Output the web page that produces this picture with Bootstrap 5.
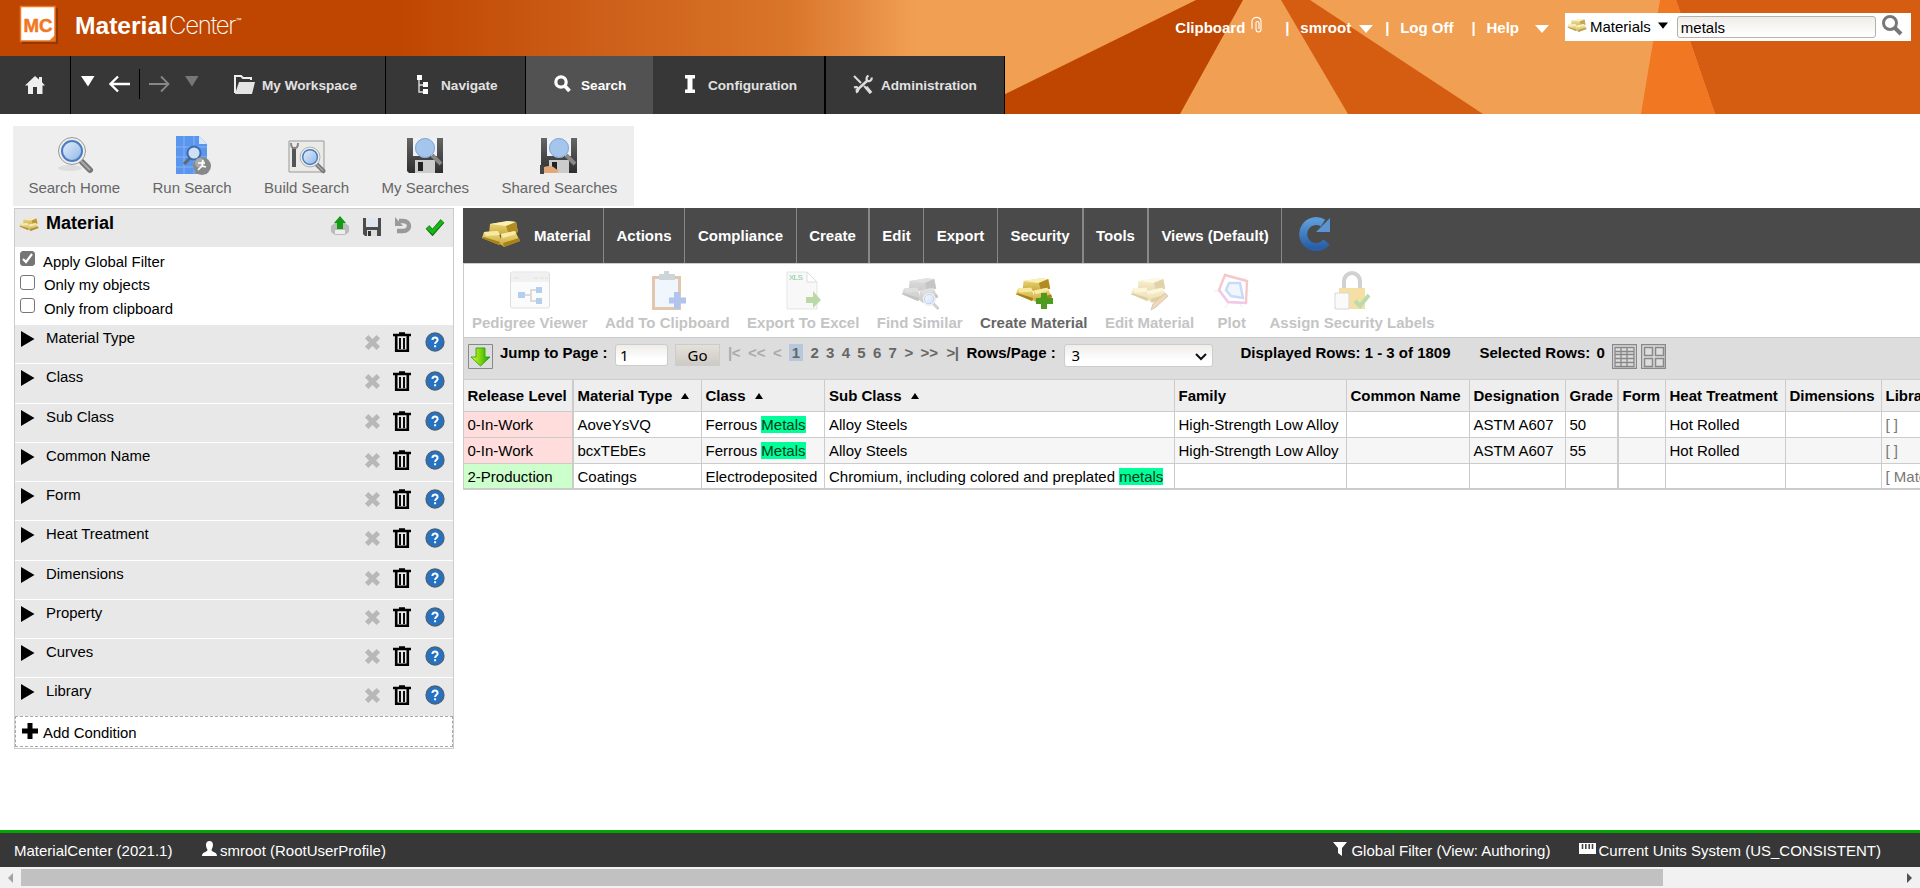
<!DOCTYPE html>
<html lang="en">
<head>
<meta charset="utf-8">
<title>MaterialCenter</title>
<link rel="stylesheet" href="https://cdn.jsdelivr.net/npm/bootstrap@5.3.0/dist/css/bootstrap.min.css">
<style>
body{font:15px/17px "Liberation Sans",Arial,sans-serif;color:#000;background:#fff;height:888px;overflow:hidden;display:flex;flex-direction:column}
svg{display:block;flex:none}
.masthead{height:114px;position:relative;overflow:hidden;flex:none}
.masthead .backdrop{position:absolute;left:0;top:0}
.masthead .topline,.masthead .mainnav{position:relative}
.topline{height:56px;color:#fff;font-weight:bold}
.wordmark{font-size:24.6px;line-height:28px;white-space:nowrap;font-weight:bold;letter-spacing:0}
.wordmark span{font-family:Inter,"Liberation Sans",sans-serif;font-weight:200;font-size:24px;letter-spacing:-1.2px;margin-left:1px}
.wordmark sup{font-size:6px;top:-12px;font-weight:400}
.userlinks{height:28px;margin-top:13px}
.userlinks>*{flex:none;white-space:nowrap}
.quick{width:346px;height:28px;background:#fff;color:#000;font-weight:normal;margin-right:9px;padding:0 8px 0 2px}
.quick .field{width:199px;height:22px;border:1px solid #b5b2ac;border-radius:3px;background:linear-gradient(#efede8,#fff);padding:2px 3px}
.mainnav{height:58px;width:1005px;background:#373737;color:#e2e2e2;font-weight:bold;font-size:13.6px;border-right:1px solid #000}
.mainnav>div{height:58px;border-right:1px solid #000;white-space:nowrap}
.mainnav>div:last-child{border-right:0}
.mainnav .current{background:#525252;color:#fff;border-right:0}
.searchbar{width:621px;height:80px;background:#eee;margin:12px 0 2px 13px;color:#666;padding:9px 0 0}
.searchbar>div{padding:0 16.2px;white-space:nowrap}
.searchbar>div:first-child{padding-left:15.4px}
.searchbar svg{margin:0 auto 4px}
.filters{width:440px;border:1px solid #ccc;margin-left:14px;height:541px;background:#fff;font-size:14.9px;flex:none}
.filters .cap{height:38px;background:#e8e8e8;padding:4px 8px 0 4px}
.filters .cap b{font-size:18px;line-height:20px}
.checks{height:78px;padding:4px 0 0 5px}
.checks label{display:flex;height:23.5px}
.tick{width:15px;height:15px;border:1.4px solid #767676;border-radius:3px;background:#fff;margin-right:9px;flex:none}
.tick.on{background:#767676;margin-right:8px}
.checks span{padding-top:2.500px}
.cond{height:39.25px;background:#e8e8e8;border-bottom:1px solid #fff;padding-left:6px;padding-right:8px}
.cond.last{height:38px;border-bottom:0}
.cond span{margin:5px 0 0 11px}
.cond .del{margin-left:auto}
.addcond{height:31px;border:1px dashed #a8a8a8;padding:6px 6px;margin-top:0}
.panel{margin-left:9px;width:1457px;overflow:hidden;flex:none}
.tabs{height:55px;background:#4a4a4a;color:#fff;font-weight:bold}
.tabs>div{height:55px;border-right:1px solid #888;display:flex;justify-content:center;align-items:center;white-space:nowrap;flex:none;padding-bottom:1px}
.tabs .thick{border-right-width:2px}
.tools{height:74px;border:solid #ccc;border-width:1px 0 0 1px;padding:5px 0 0;font-weight:bold;color:#666}
.tools>div{padding:0 8.7px;min-width:58px;text-align:center;white-space:nowrap}
.tools>div:first-child{padding-left:8px}
.tools svg{margin:0 auto 3px}
.tools .off{color:#c4c4c4}
.tools .off svg{opacity:.38}
.pager{height:42px;border:solid #ccc;border-width:1px 0 0 1px;background:#ddd;padding:6px 0 0 4px;font-weight:bold}
.pager>*{flex:none;white-space:nowrap}
.pager .pg{color:#666}
.pager .dim{color:#aaa}
.pager .here{background:#b9c7dd;width:14px;height:17px;text-align:center}
.inp{font:15px/20px "Noto Sans","Liberation Sans",sans-serif;height:22px;border:1px solid #ccc;border-radius:3px;background:linear-gradient(#efede9,#fff 70%)}
.gobtn{background:linear-gradient(#e4e0da,#cfcac3);border-radius:0;text-align:center}
.grid{table-layout:fixed;width:1540px;border-collapse:separate;border-spacing:0;border-left:1px solid #ccc;border-top:1px solid #ccc}
.grid th,.grid td{border-right:1px solid #ccc;border-bottom:1px solid #ccc;padding:4px 0 0 3.500px;vertical-align:top;height:26px;white-space:nowrap}
.grid th{height:32px;background:#eee;padding-top:7px;font-weight:bold}
.grid .w2{border-right-width:2px}
.grid tbody tr:nth-child(2) td{background:#f6f6f6}
.grid tbody tr:last-child td{border-bottom-width:2px}
.grid tbody .work,.grid tbody tr:nth-child(2) .work{background:#fdd}
.grid tbody .prod{background:#cfc}
.grid .s4{padding-left:4px}
.grid em{font-style:normal;background:#0f9;color:#003b1c}
.grid i{display:inline-block;border:solid transparent;border-width:0 4.5px 6px;border-bottom-color:#000;margin-left:9px;vertical-align:2px}
.grid .lib{color:#777}
.statusbar{height:37px;border-top:3px solid #00a800;background:#373737;color:#fff;margin-top:auto;flex:none;padding-left:14px}
.scroller{height:21px;background:#f1f1f1;flex:none}
.scroller .thumb{height:17px;width:1642px;background:#c1c1c1;margin:0 0 0 8px}
</style>
</head>
<body>
<svg width="0" height="0" style="position:absolute">
<defs>
<linearGradient id="gold" x2="0" y2="1"><stop stop-color="#f0dc86"/><stop offset="1" stop-color="#c9a838"/></linearGradient>
<linearGradient id="lens" x2="1" y2="1"><stop stop-color="#e6f0fb"/><stop offset="1" stop-color="#8fb6e6"/></linearGradient>
<linearGradient id="blu" x2="0" y2="1"><stop stop-color="#5b9bd8"/><stop offset="1" stop-color="#2a5fa8"/></linearGradient>
<linearGradient id="steel" x2="0" y2="1"><stop stop-color="#666"/><stop offset="1" stop-color="#2e2e2e"/></linearGradient>
<linearGradient id="grn" x2="1" y2="0"><stop stop-color="#e0ff20"/><stop offset="1" stop-color="#19a800"/></linearGradient>
<symbol id="bars" viewBox="0 0 40 28">
<path d="M9 4l18-3 8 1 2 10-9 3-20-1z" fill="url(#gold)"/><path d="M9 4l18-3 8 1-10 4z" fill="#fbf0b4"/><path d="M25 6l10-4 2 10-9 3z" fill="#b08c22"/>
<path d="M3 12l14-1 4 12-3 2-17-7z" fill="url(#gold)"/><path d="M3 12l14-1 2 4-14 1z" fill="#f7e9a0"/>
<path d="M20 14l14-3 5 10-16 6-4-3z" fill="url(#gold)"/><path d="M20 14l14-3 1 3-13 4z" fill="#f9eba6"/><path d="M1 18l17 7 1-3-16-5zM23 27l16-6-1-3-16 5z" fill="#a8811a"/>
</symbol>
<symbol id="mag" viewBox="0 0 38 38"><path d="M24 25l9 9" stroke="#777" stroke-width="6" stroke-linecap="round"/><path d="M24 25l9 9" stroke="#aaa" stroke-width="2"/><circle cx="15" cy="15" r="13.5" fill="#eee" stroke="#999"/><circle cx="15" cy="15" r="10" fill="url(#lens)" stroke="#4a7dbf" stroke-width="2"/></symbol>
<symbol id="disk" viewBox="0 0 38 38"><path d="M1 2h36v35H3l-2-2z" fill="url(#steel)"/><path d="M7 2h24v18H7z" fill="#eef2f6"/><path d="M9 24h20v13H9z" fill="#ccc"/><path d="M12 26h5v9h-5z" fill="#222"/><path d="M26 19l9 9" stroke="#888" stroke-width="4"/><circle cx="19" cy="12" r="10" fill="#ccd"/><circle cx="19" cy="12" r="9.5" fill="#a5c6ec" stroke="#7fa8d8"/></symbol>
<symbol id="tri" viewBox="0 0 14 16"><path d="M0 0l13.500 8L0 16z" fill="#000"/></symbol>
<symbol id="ex" viewBox="0 0 16 16"><path d="M2.500 2.500l11 11M13.500 2.500l-11 11" stroke="#b8b8b8" stroke-width="4.600"/></symbol>
<symbol id="bin" viewBox="0 0 18 20"><path d="M6 1.500h6M0 3h18" stroke="#000" stroke-width="2.600" fill="none"/><path d="M3.200 4v14.700h11.600V4" fill="none" stroke="#000" stroke-width="2.600"/><path d="M7 6v11M11 6v11" stroke="#000" stroke-width="1.900"/></symbol>
<symbol id="help" viewBox="0 0 20 20"><circle cx="10" cy="10" r="9" fill="#2672c0" stroke="#4b6177" stroke-width="1.300"/><path d="M7.400 8c0-3.400 5.200-3.200 5.200 0 0 1.700-2.500 1.900-2.500 3.900M10.100 13.300v2" fill="none" stroke="#fff" stroke-width="2"/></symbol>
<symbol id="down" viewBox="0 0 14 10"><path d="M0 0h14L7 8z" fill="currentColor"/></symbol>
</defs></svg>

<header class="masthead">
<svg class="backdrop" width="1920" height="114"><defs><linearGradient id="sky" gradientUnits="userSpaceOnUse" x1="400" x2="915" y1="0" y2="0"><stop stop-color="#bf4600"/><stop offset=".4" stop-color="#cd601a"/><stop offset=".75" stop-color="#d97528"/><stop offset=".88" stop-color="#e48a40"/><stop offset="1" stop-color="#f19f53"/></linearGradient></defs>
<path fill="url(#sky)" d="M0 0h1920v114H0z"/><path fill="#bf4600" d="M1196 0h47l-63 114H965z"/><path fill="#d45d12" d="M1281 0h29l173 114h-135zM1676 0h244v114h-205z"/><path fill="#f17723" d="M1660 0h16l39 114h-74z"/></svg>
<div class="topline d-flex">
<svg width="42" height="46" class="ms-3" style="margin-top:3px"><path d="M6 5h36v36H6z" fill="#6b2700" opacity=".5"/><path d="M4.500 3.500h34.500v34.500H4.500z" fill="#fff" stroke="#f17723" stroke-width="1.500"/><path d="M39 32v6h-6z" fill="#f17723"/><text x="22" y="28.500" text-anchor="middle" font-size="19" font-weight="bold" fill="#f17723" stroke="#f17723" stroke-width=".5" textLength="29" lengthAdjust="spacingAndGlyphs">MC</text></svg>
<div class="wordmark" style="margin:12px 0 0 17px">Material<span>Center</span><sup>™</sup></div>
<div class="userlinks d-flex ms-auto">
<div style="margin:6px 5px 0 0">Clipboard</div>
<svg width="13" height="18" viewBox="0 0 13 18" style="margin:3px 22px 0 0"><path d="M2 13V5.500C2 0 11 0 11 5.500V13c0 4-5 4-5 0V7c0-2 3-2 3 0v6" fill="none" stroke="#fff" stroke-width="1.100"/></svg>
<div style="margin:6px 11px 0 0;width:4px">|</div><div style="margin:6px 8px 0 0">smroot</div><svg width="14" height="10" style="margin:12px 12px 0 0"><use href="#down"/></svg>
<div style="margin:6px 11px 0 0;width:4px">|</div><div style="margin:6px 18px 0 0">Log Off</div><div style="margin:6px 11px 0 0;width:4px">|</div><div style="margin:6px 16px 0 0">Help</div><svg width="14" height="10" style="margin:12px 16px 0 0"><use href="#down"/></svg>
<div class="quick d-flex align-items-center"><svg width="20" height="15" opacity=".75" style="margin-bottom:3px"><use href="#bars"/></svg><span style="margin-left:3px;margin-top:-2px">Materials</span><svg width="10" height="8" viewBox="0 0 14 10" style="margin:0 9px 2px 7px"><path d="M0 0h14L7 9z"/></svg><div class="field">metals</div><svg width="22" height="22" viewBox="0 0 22 22" class="ms-auto" style="margin-bottom:4px"><circle cx="9" cy="9" r="6.500" fill="none" stroke="#777" stroke-width="3"/><path d="M14 14l6 6" stroke="#777" stroke-width="4"/></svg></div>
</div></div>
<nav class="mainnav d-flex">
<div style="width:71px;padding:20px 0 0 25px"><svg width="20" height="18" viewBox="0 0 20 18"><path d="M10 0l4 3.600V1h3v5.200l3 3.300h-2.500V18H12v-7H8v7H3V9.500H0z" fill="#eee"/></svg></div>
<div class="d-flex" style="width:315px;padding-left:10px"><svg width="14" height="12" viewBox="0 0 14 12" style="margin:20px 15px 0 0"><path d="M0 0h13.500L7 10.500z" fill="#fff"/></svg>
<svg width="22" height="18" viewBox="0 0 22 18" style="margin:19px 7px 0 -1px"><path d="M21 9H2M9 1.500L1.500 9 9 16.500" fill="none" stroke="#fff" stroke-width="2.300"/></svg>
<div style="width:1px;height:30px;background:#000;margin:13px 9px 0 1px"></div>
<svg width="22" height="18" viewBox="0 0 22 18" style="margin:19px 14px 0 0"><path d="M0 9h19M12 1.500L19.500 9 12 16.500" fill="none" stroke="#888" stroke-width="1.800"/></svg>
<svg width="14" height="12" viewBox="0 0 14 12" style="margin:20px 35px 0 0"><path d="M0 0h13.500L7 10.500z" fill="#777"/></svg>
<svg width="22" height="19" viewBox="0 0 22 19" style="margin:19px 6px 0 0"><path d="M1 18V1h6l2 2h8v2" fill="none" stroke="#eee" stroke-width="2"/><path d="M5 7h16l-3 12H1z" fill="#e4e4e4"/></svg><span style="margin-top:21px">My Workspace</span></div>
<div class="d-flex" style="width:140px;padding-left:31px"><svg width="11" height="20" viewBox="0 0 11 20" style="margin:19px 13px 0 0"><path d="M2 2v15h5M2 10h5" fill="none" stroke="#ddd" stroke-width="1.400"/><path d="M0 0h5v5H0zM6 7h5v5H6zM6 14h5v5H6z" fill="#fff"/></svg><span style="margin-top:21px">Navigate</span></div>
<div class="d-flex current" style="width:127px;padding-left:28px"><svg width="17" height="18" viewBox="0 0 17 18" style="margin:19px 10px 0 0"><circle cx="7" cy="7" r="5.200" fill="none" stroke="#fff" stroke-width="3.200"/><path d="M10 10l5.500 6" stroke="#fff" stroke-width="3.800"/></svg><span style="margin-top:21px">Search</span></div>
<div class="d-flex" style="width:173px;padding-left:32px;border-right-width:2px"><svg width="10" height="18" viewBox="0 0 10 18" style="margin:19px 13px 0 0"><path d="M0 0h10v3.500H7.500v11H10V18H0v-3.500h2.500v-11H0z" fill="#fff"/></svg><span style="margin-top:21px">Configuration</span></div>
<div class="d-flex" style="padding-left:27px"><svg width="20" height="19" viewBox="0 0 20 19" style="margin:19px 8px 0 0"><path d="M1 1l7 7M11 11l6 6" stroke="#ddd" stroke-width="2"/><path d="M13 12l5 6" stroke="#ddd" stroke-width="3.500"/><path d="M3 16L15 5" stroke="#ddd" stroke-width="2.400"/><path d="M18.500 2.500c1 4-5 5-5 1.500 0-2 1-3 2-3.500M1 12.500c4-2 6 3 2 5" fill="none" stroke="#ddd" stroke-width="2.200"/></svg><span style="margin-top:21px">Administration</span></div>
</nav>
</header>

<section class="searchbar d-flex">
<div><svg width="38" height="40" viewBox="0 0 38 40" style="transform:translateX(2px)"><ellipse cx="13" cy="33" rx="12" ry="3" fill="#ddd"/><use href="#mag" width="38" height="38" y="1"/></svg>Search Home</div>
<div><svg width="38" height="40" viewBox="0 0 38 40"><path d="M3 1h23l8 8v30H3z" fill="#5b96ee"/><path d="M26 1l8 8h-8z" fill="#dbe8fc"/><path d="M3 12h31M3 22h31M3 32h31M11 1v38M21 1v38" stroke="#86b1f4"/><path d="M18 22l-7 7" stroke="#666" stroke-width="3"/><circle cx="21" cy="18" r="6.500" fill="#cfe0f5" stroke="#3b6cb0" stroke-width="2"/><circle cx="29" cy="31" r="9" fill="#888"/><circle cx="27" cy="28" r="5" fill="#aaa"/><path d="M30 25l-1 6 4 1M29 31l-4 4M25 28h7" stroke="#fff" stroke-width="1.700" fill="none"/></svg>Run Search</div>
<div><svg width="40" height="40" viewBox="0 0 40 40"><path d="M2 6h35v31H2z" fill="#eaeae6" stroke="#999"/><path d="M7 12v20" stroke="#555" stroke-width="4"/><path d="M4 8c0 7 7 7 7 0" fill="none" stroke="#888" stroke-width="2"/><use href="#mag" x="12" y="11" width="28" height="28"/></svg>Build Search</div>
<div><svg width="38" height="40"><use href="#disk" width="38" height="38" y="1"/></svg>My Searches</div>
<div><svg width="38" height="40"><use href="#disk" width="38" height="38" y="1"/><path d="M0 30h4v9H0z" fill="#444"/><path d="M4 32c6-2 9-1 12 2l3 1-2 3H4z" fill="#e3a878"/></svg>Shared Searches</div>
</section>

<main class="d-flex">
<aside class="filters">
<div class="cap d-flex"><svg width="20" height="15" style="margin:4px 7px 0 0;opacity:.85"><use href="#bars"/></svg><b>Material</b>
<svg width="20" height="20" viewBox="0 0 20 20" class="ms-auto" style="margin-top:3px;margin-right:13px"><path d="M1 10l4-3h10l4 3v6l-4 3H5l-4-3z" fill="#bbb"/><path d="M5 14h10v4H5z" fill="#eee"/><path d="M10 0l6 7h-3v6H7V7H4z" fill="#129a12"/></svg>
<svg width="18" height="18" viewBox="0 0 18 18" style="margin-top:5px;margin-right:13px"><path d="M0 0h18v18H2l-2-2z" fill="#4c4c4c"/><path d="M3 0h12v9H3z" fill="#dfe6ee"/><path d="M4 12h10v6H4z" fill="#ddd"/><path d="M5 13h3v5H5z" fill="#333"/></svg>
<svg width="18" height="18" viewBox="0 0 18 18" style="margin-top:4px;margin-right:13px"><path d="M5 4h4c8 0 8 10 0 10H3" fill="none" stroke="#999" stroke-width="4.500"/><path d="M1 0v9h8z" fill="#999"/></svg>
<svg width="20" height="18" viewBox="0 0 20 18" style="margin-top:5px"><path d="M2.500 9l5 5.500L17.500 3" fill="none" stroke="#0b6d0b" stroke-width="5"/><path d="M2.500 9l5 5L17.500 3" fill="none" stroke="#19b519" stroke-width="3.600"/></svg></div>
<div class="checks">
<label><div class="tick on"><svg width="13" height="13" viewBox="0 0 13 13"><path d="M2 7l3 3 6-8" fill="none" stroke="#fff" stroke-width="2.200"/></svg></div><span>Apply Global Filter</span></label>
<label><div class="tick"></div><span>Only my objects</span></label>
<label><div class="tick"></div><span>Only from clipboard</span></label></div>
<div class="cond d-flex"><svg width="14" height="16" style="margin-top:6px"><use href="#tri"/></svg><span>Material Type</span><svg class="del" width="17" height="17" style="margin-top:9px"><use href="#ex"/></svg><svg width="18" height="20" style="margin:7px 14px 0 12px"><use href="#bin"/></svg><svg width="20" height="20" style="margin-top:7px"><use href="#help"/></svg></div>
<div class="cond d-flex"><svg width="14" height="16" style="margin-top:6px"><use href="#tri"/></svg><span>Class</span><svg class="del" width="17" height="17" style="margin-top:9px"><use href="#ex"/></svg><svg width="18" height="20" style="margin:7px 14px 0 12px"><use href="#bin"/></svg><svg width="20" height="20" style="margin-top:7px"><use href="#help"/></svg></div>
<div class="cond d-flex"><svg width="14" height="16" style="margin-top:6px"><use href="#tri"/></svg><span>Sub Class</span><svg class="del" width="17" height="17" style="margin-top:9px"><use href="#ex"/></svg><svg width="18" height="20" style="margin:7px 14px 0 12px"><use href="#bin"/></svg><svg width="20" height="20" style="margin-top:7px"><use href="#help"/></svg></div>
<div class="cond d-flex"><svg width="14" height="16" style="margin-top:6px"><use href="#tri"/></svg><span>Common Name</span><svg class="del" width="17" height="17" style="margin-top:9px"><use href="#ex"/></svg><svg width="18" height="20" style="margin:7px 14px 0 12px"><use href="#bin"/></svg><svg width="20" height="20" style="margin-top:7px"><use href="#help"/></svg></div>
<div class="cond d-flex"><svg width="14" height="16" style="margin-top:6px"><use href="#tri"/></svg><span>Form</span><svg class="del" width="17" height="17" style="margin-top:9px"><use href="#ex"/></svg><svg width="18" height="20" style="margin:7px 14px 0 12px"><use href="#bin"/></svg><svg width="20" height="20" style="margin-top:7px"><use href="#help"/></svg></div>
<div class="cond d-flex"><svg width="14" height="16" style="margin-top:6px"><use href="#tri"/></svg><span>Heat Treatment</span><svg class="del" width="17" height="17" style="margin-top:9px"><use href="#ex"/></svg><svg width="18" height="20" style="margin:7px 14px 0 12px"><use href="#bin"/></svg><svg width="20" height="20" style="margin-top:7px"><use href="#help"/></svg></div>
<div class="cond d-flex"><svg width="14" height="16" style="margin-top:6px"><use href="#tri"/></svg><span>Dimensions</span><svg class="del" width="17" height="17" style="margin-top:9px"><use href="#ex"/></svg><svg width="18" height="20" style="margin:7px 14px 0 12px"><use href="#bin"/></svg><svg width="20" height="20" style="margin-top:7px"><use href="#help"/></svg></div>
<div class="cond d-flex"><svg width="14" height="16" style="margin-top:6px"><use href="#tri"/></svg><span>Property</span><svg class="del" width="17" height="17" style="margin-top:9px"><use href="#ex"/></svg><svg width="18" height="20" style="margin:7px 14px 0 12px"><use href="#bin"/></svg><svg width="20" height="20" style="margin-top:7px"><use href="#help"/></svg></div>
<div class="cond d-flex"><svg width="14" height="16" style="margin-top:6px"><use href="#tri"/></svg><span>Curves</span><svg class="del" width="17" height="17" style="margin-top:9px"><use href="#ex"/></svg><svg width="18" height="20" style="margin:7px 14px 0 12px"><use href="#bin"/></svg><svg width="20" height="20" style="margin-top:7px"><use href="#help"/></svg></div>
<div class="cond last d-flex"><svg width="14" height="16" style="margin-top:6px"><use href="#tri"/></svg><span>Library</span><svg class="del" width="17" height="17" style="margin-top:9px"><use href="#ex"/></svg><svg width="18" height="20" style="margin:7px 14px 0 12px"><use href="#bin"/></svg><svg width="20" height="20" style="margin-top:7px"><use href="#help"/></svg></div>
<div class="addcond d-flex"><svg width="16" height="16" viewBox="0 0 16 16"><path d="M8 0v16M0 8h16" stroke="#000" stroke-width="5"/></svg><span style="margin:2px 0 0 5px">Add Condition</span></div>
</aside>

<section class="panel">
<div class="tabs d-flex">
<div style="width:141px;justify-content:flex-start;padding-left:18px"><svg width="40" height="28" style="margin:0 13px 3px 0"><use href="#bars"/></svg>Material</div><div style="width:81px">Actions</div><div style="width:112px">Compliance</div><div class="thick" style="width:73px">Create</div><div style="width:54px">Edit</div><div style="width:74px">Export</div><div class="thick" style="width:86px">Security</div><div class="thick" style="width:65px">Tools</div><div style="width:133px">Views (Default)</div>
<svg width="34" height="36" viewBox="0 0 34 36" style="margin:7px 0 0 15px"><path d="M29.500 27A13 13 0 1 1 26 8" fill="none" stroke="url(#blu)" stroke-width="8"/><path d="M33 3v14H19z" fill="#5b94d2"/></svg>
</div>
<div class="tools d-flex">
<div class="off"><svg width="42" height="42" viewBox="0 0 42 42"><rect x="1.500" y="3" width="39" height="36" rx="2" fill="#f6f6f6" stroke="#aaa"/><path d="M2 4h38v9H2z" fill="#ddd"/><path d="M5 9h5M25 9h4M31 9h4M36 9h3" stroke="#aaa"/><path d="M14 26h7m6-5h-5v11h5" fill="none" stroke="#888" stroke-width="1.500"/><path d="M9 23h7v6H9zM27 18h6v6h-6zM27 29h6v6h-6z" fill="#3c7fd8"/></svg>Pedigree Viewer</div>
<div class="off"><svg width="38" height="42" viewBox="0 0 38 42"><path d="M4 7h29v34H4z" fill="#b9692c"/><path d="M7 10h23v28H7z" fill="#d6eafc"/><path d="M11 5h5V2h5v3h6v6H11z" fill="#7f9297"/><path d="M29 23v17M21 31.500h17" stroke="#3566d4" stroke-width="6"/></svg>Add To Clipboard</div>
<div class="off"><svg width="36" height="42" viewBox="0 0 36 42"><path d="M2 3h20l10 10v27H2z" fill="#eee" stroke="#bbb"/><path d="M22 3v10h10z" fill="#fff" stroke="#aaa"/><text x="4" y="11" font-size="8" fill="#169c3c" textLength="14">XLS</text><path d="M21 28h7v-6l8 9-8 8v-5h-7z" fill="#4b9a1d"/></svg>Export To Excel</div>
<div class="off"><svg width="42" height="42" viewBox="0 0 42 42"><g style="filter:grayscale(1) brightness(.75)"><use href="#bars" width="38" height="27" x="2" y="8"/></g><use href="#mag" x="23" y="23" width="18" height="18"/></svg>Find Similar</div>
<div><svg width="42" height="42" viewBox="0 0 42 42"><use href="#bars" width="38" height="27" x="2" y="8"/><path d="M31 24v16M23 32h17" stroke="#4c9a1e" stroke-width="6"/></svg>Create Material</div>
<div class="off"><svg width="42" height="42" viewBox="0 0 42 42"><use href="#bars" width="38" height="27" x="2" y="8"/><path d="M37 24l3 3-12 11-5 3 2-6z" fill="#e39a28" stroke="#777"/></svg>Edit Material</div>
<div class="off"><svg width="36" height="42" viewBox="0 0 36 42"><path d="M0 22h35M11 4l17 34M32 8L11 39" stroke="#ccc"/><path d="M11 6l22 6-1 22-18-1-9-12z" fill="#fff" stroke="#e87070" stroke-width="2.400"/><path d="M15 14h11l3 15-12-2-5-6z" fill="#dce8fa" stroke="#6fa4f4" stroke-width="2.500"/><path d="M5 21l9 12 18 1" fill="none" stroke="#dc72d8" stroke-width="2"/></svg>Plot</div>
<div class="off"><svg width="40" height="42" viewBox="0 0 40 42"><path d="M12 20v-7c0-12 16-12 16 0v7" fill="none" stroke="#888" stroke-width="4"/><path d="M7 19h26v21H7z" fill="#e8ae12"/><path d="M3 24h14v16H3z" fill="#f2f2f2" stroke="#999"/><path d="M23 32l5 5 9-11" fill="none" stroke="#4ba52a" stroke-width="4"/></svg>Assign Security Labels</div>
</div>
<div class="pager d-flex">
<svg width="25" height="25" viewBox="0 0 25 25"><path d="M.5.500h24v24H.5z" fill="none" stroke="#888"/><path d="M8 4h9v9h5l-9.500 9L3 13h5z" fill="url(#grn)" stroke="#1aa000" stroke-width=".8"/></svg>
<div style="width:122px;padding-left:7px">Jump to Page :</div><div class="inp" style="width:53px;padding-left:4px">1</div><div class="inp gobtn" style="width:45px;margin-left:7px">Go</div>
<div class="pg dim" style="margin-left:8px;width:20px;letter-spacing:-.4px">|&lt;</div><div class="pg dim" style="width:25px">&lt;&lt;</div><div class="pg dim" style="width:16px">&lt;</div><div class="pg here">1</div><div class="pg" style="width:15.600px;margin-left:7.500px">2</div><div class="pg" style="width:15.600px">3</div><div class="pg" style="width:15.600px">4</div><div class="pg" style="width:15.600px">5</div><div class="pg" style="width:15.600px">6</div><div class="pg" style="width:16px">7</div><div class="pg" style="width:16px">&gt;</div><div class="pg" style="width:26px">&gt;&gt;</div><div class="pg" style="width:20px;letter-spacing:-.4px">&gt;|</div>
<div style="width:98px">Rows/Page :</div><div class="inp d-flex" style="width:149px;height:23px;padding-left:6px">3<svg class="ms-auto" width="12" height="8" viewBox="0 0 12 8" style="margin:8px 5px 0 0"><path d="M1 1l5 5 5-5" fill="none" stroke="#111" stroke-width="2"/></svg></div>
<div style="width:266px;padding-left:27px">Displayed Rows: 1 - 3 of 1809</div><div style="width:117px">Selected Rows:</div><div style="width:16px">0</div>
<svg width="25" height="25" viewBox="0 0 25 25"><path d="M.5.500h24v24H.5zM3 3.500h19v19H3zM3 7.500h19M3 10.500h19M3 14.500h19M3 18.500h19M9 4v18M15 4v18" fill="none" stroke="#888" stroke-width="1.300"/></svg>
<svg width="25" height="25" viewBox="0 0 25 25" style="margin-left:4px"><path d="M.5.500h24v24H.5zM3.500 3.500h8v8h-8zM14.500 3.500h8v8h-8zM3.500 14.500h8v8h-8zM14.500 14.500h8v8h-8z" fill="none" stroke="#888" stroke-width="1.500"/></svg>
</div>
<table class="grid"><colgroup><col style="width:110px"><col style="width:128px"><col style="width:123px"><col style="width:350px"><col style="width:172px"><col style="width:123px"><col style="width:96px"><col style="width:53px"><col style="width:47px"><col style="width:120px"><col style="width:96px"><col></colgroup>
<thead><tr><th class="w2">Release Level</th><th>Material Type<i></i></th><th>Class<i></i></th><th class="s4">Sub Class<i></i></th><th>Family</th><th>Common Name</th><th>Designation</th><th class="w2">Grade</th><th>Form</th><th>Heat Treatment</th><th>Dimensions</th><th>Library</th></tr></thead>
<tbody>
<tr><td class="w2 work">0-In-Work</td><td>AoveYsVQ</td><td>Ferrous <em>Metals</em></td><td class="s4">Alloy Steels</td><td>High-Strength Low Alloy</td><td></td><td>ASTM A607</td><td class="w2">50</td><td></td><td>Hot Rolled</td><td></td><td class="lib">[ ]</td></tr>
<tr><td class="w2 work">0-In-Work</td><td>bcxTEbEs</td><td>Ferrous <em>Metals</em></td><td class="s4">Alloy Steels</td><td>High-Strength Low Alloy</td><td></td><td>ASTM A607</td><td class="w2">55</td><td></td><td>Hot Rolled</td><td></td><td class="lib">[ ]</td></tr>
<tr><td class="w2 prod">2-Production</td><td>Coatings</td><td>Electrodeposited</td><td class="s4">Chromium, including colored and preplated <em>metals</em></td><td></td><td></td><td></td><td class="w2"></td><td></td><td></td><td></td><td class="lib">[ Materials ]</td></tr>
</tbody></table>
</section>
</main>

<footer class="statusbar d-flex align-items-center">
<span style="width:188px">MaterialCenter (2021.1)</span><svg width="15" height="15" viewBox="0 0 15 15" style="margin:0 3px 3px 0"><path d="M7.500 0C12 0 11.500 6 9.500 8.500c0 3 5.500 2 5.500 6.500H0c0-4.500 5.500-3.500 5.500-6.500C3.500 6 3 0 7.500 0z" fill="#fff"/></svg><span>smroot (RootUserProfile)</span>
<svg class="ms-auto" width="14" height="14" viewBox="0 0 14 14" style="margin:0 4px 3px 0"><path d="M0 0h14L9 6v8l-4-3V6z" fill="#fff"/></svg><span style="width:228px">Global Filter (View: Authoring)</span>
<svg width="17" height="11" viewBox="0 0 17 11" style="margin:0 2px 3px 0"><path d="M0 0h17v11H0z" fill="#fff"/><path d="M3.500 1v5M6.800 1v5M10.200 1v5M13.500 1v5" stroke="#444" stroke-width="1.600"/></svg><span style="margin-right:39px">Current Units System (US_CONSISTENT)</span>
</footer>
<div class="scroller d-flex align-items-center"><svg width="5" height="10" viewBox="0 0 5 10" style="margin-left:8px"><path d="M5 0v10L0 5z" fill="#a3a3a3"/></svg><div class="thumb"></div><svg class="ms-auto" width="5" height="10" viewBox="0 0 5 10" style="margin-right:8px"><path d="M0 0v10l5-5z" fill="#505050"/></svg></div>
<script src="https://cdn.jsdelivr.net/npm/bootstrap@5.3.0/dist/js/bootstrap.bundle.min.js"></script>
</body>
</html>
